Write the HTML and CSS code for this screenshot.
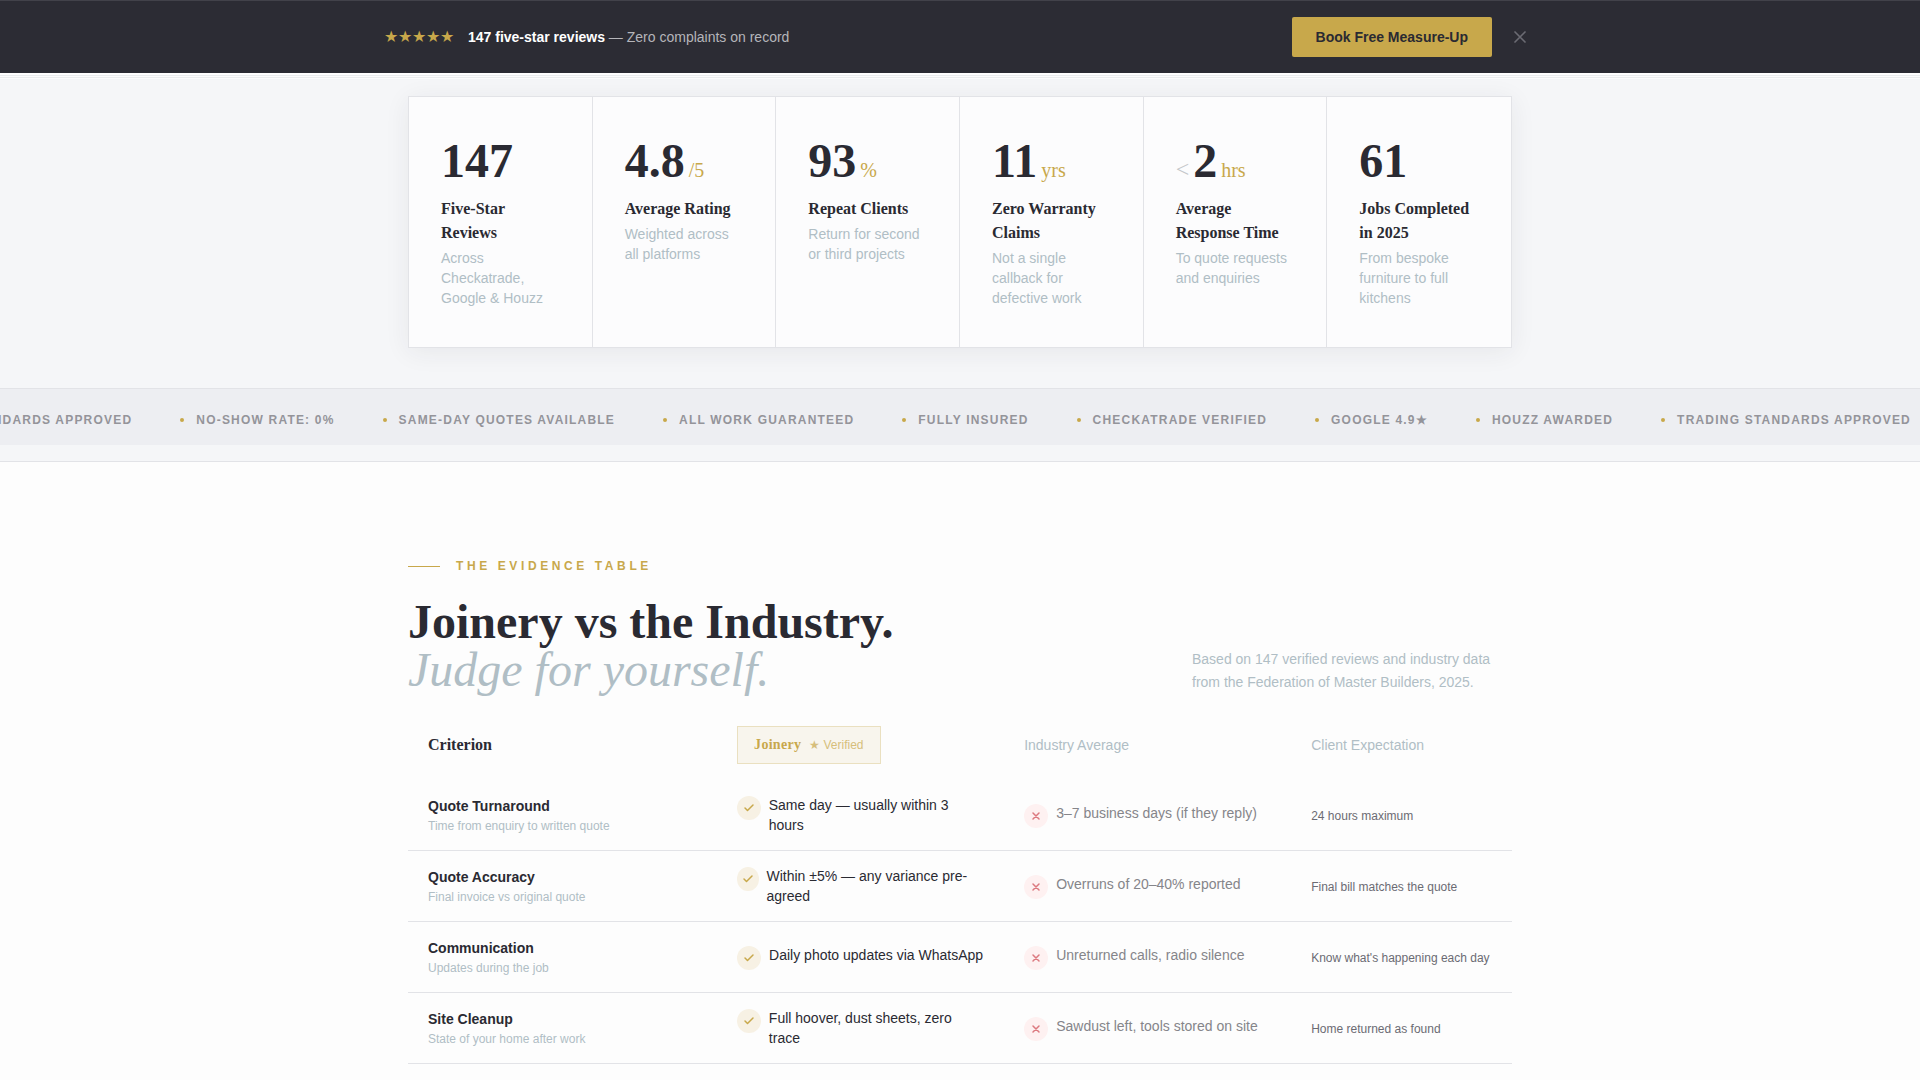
FILE: index.html
```html
<!DOCTYPE html>
<html lang="en">
<head>
<meta charset="utf-8">
<meta name="viewport" content="width=device-width, initial-scale=1">
<title>Joinery vs the Industry</title>
<link rel="stylesheet" href="styles.css">
</head>
<body>
<svg class="sprite" aria-hidden="true">
  <symbol id="check" viewBox="0 0 24 24"><path d="M20 6 9 17l-5-5"/></symbol>
  <symbol id="cross" viewBox="0 0 24 24"><path d="M18 6 6 18M6 6l12 12"/></symbol>
</svg>

<aside class="promo">
  <div class="promo-inner">
    <div class="promo-message">
      <span class="promo-stars">★★★★★</span>
      <p class="promo-text"><strong>147 five-star reviews</strong> — Zero complaints on record</p>
    </div>
    <button class="promo-book" type="button">Book Free Measure-Up</button>
    <button class="promo-close" type="button" aria-label="Dismiss"><svg class="icon"><use href="#cross"/></svg></button>
  </div>
</aside>

<section class="proof">
  <div class="container">
    <div class="stats">
      <div class="stat">
        <div class="stat-figure"><span class="stat-number">147</span></div>
        <h3 class="stat-label">Five-Star Reviews</h3>
        <p class="stat-note">Across Checkatrade, Google &amp; Houzz</p>
      </div>
      <div class="stat">
        <div class="stat-figure"><span class="stat-number">4.8</span><span class="stat-unit">/5</span></div>
        <h3 class="stat-label">Average Rating</h3>
        <p class="stat-note">Weighted across all platforms</p>
      </div>
      <div class="stat">
        <div class="stat-figure"><span class="stat-number">93</span><span class="stat-unit">%</span></div>
        <h3 class="stat-label">Repeat Clients</h3>
        <p class="stat-note">Return for second or third projects</p>
      </div>
      <div class="stat">
        <div class="stat-figure"><span class="stat-number">11</span><span class="stat-unit">yrs</span></div>
        <h3 class="stat-label">Zero Warranty Claims</h3>
        <p class="stat-note">Not a single callback for defective work</p>
      </div>
      <div class="stat">
        <div class="stat-figure"><span class="stat-prefix">&lt;</span><span class="stat-number">2</span><span class="stat-unit">hrs</span></div>
        <h3 class="stat-label">Average Response Time</h3>
        <p class="stat-note">To quote requests and enquiries</p>
      </div>
      <div class="stat">
        <div class="stat-figure"><span class="stat-number">61</span></div>
        <h3 class="stat-label">Jobs Completed in 2025</h3>
        <p class="stat-note">From bespoke furniture to full kitchens</p>
      </div>
    </div>
  </div>
  <div class="ticker">
    <ul class="ticker-track">
      <li>Trading Standards Approved</li>
      <li>No-Show Rate: 0%</li>
      <li>Same-Day Quotes Available</li>
      <li>All Work Guaranteed</li>
      <li>Fully Insured</li>
      <li>Checkatrade Verified</li>
      <li>Google 4.9★</li>
      <li>Houzz Awarded</li>
      <li>Trading Standards Approved</li>
    </ul>
  </div>
</section>

<main class="evidence">
  <div class="container">
    <p class="eyebrow">The Evidence Table</p>
    <header class="evidence-head">
      <h2 class="title">Joinery vs the Industry.<em>Judge for yourself.</em></h2>
      <p class="source">Based on 147 verified reviews and industry data from the Federation of Master Builders, 2025.</p>
    </header>
    <table class="compare">
      <thead>
        <tr>
          <th class="col-criterion" scope="col">Criterion</th>
          <th class="col-joinery" scope="col"><span class="brand"><strong>Joinery</strong><span class="brand-tag">★ Verified</span></span></th>
          <th class="col-industry" scope="col">Industry Average</th>
          <th class="col-client" scope="col">Client Expectation</th>
        </tr>
      </thead>
      <tbody>
        <tr>
          <th scope="row">Quote Turnaround<small>Time from enquiry to written quote</small></th>
          <td><div class="verdict good"><span class="mark"><svg class="icon"><use href="#check"/></svg></span><span>Same day — usually within 3 hours</span></div></td>
          <td><div class="verdict bad"><span class="mark"><svg class="icon"><use href="#cross"/></svg></span><span>3–7 business days (if they reply)</span></div></td>
          <td class="expect">24 hours maximum</td>
        </tr>
        <tr>
          <th scope="row">Quote Accuracy<small>Final invoice vs original quote</small></th>
          <td><div class="verdict good"><span class="mark"><svg class="icon"><use href="#check"/></svg></span><span>Within ±5% — any variance pre-agreed</span></div></td>
          <td><div class="verdict bad"><span class="mark"><svg class="icon"><use href="#cross"/></svg></span><span>Overruns of 20–40% reported</span></div></td>
          <td class="expect">Final bill matches the quote</td>
        </tr>
        <tr>
          <th scope="row">Communication<small>Updates during the job</small></th>
          <td><div class="verdict good"><span class="mark"><svg class="icon"><use href="#check"/></svg></span><span>Daily photo updates via WhatsApp</span></div></td>
          <td><div class="verdict bad"><span class="mark"><svg class="icon"><use href="#cross"/></svg></span><span>Unreturned calls, radio silence</span></div></td>
          <td class="expect">Know what's happening each day</td>
        </tr>
        <tr>
          <th scope="row">Site Cleanup<small>State of your home after work</small></th>
          <td><div class="verdict good"><span class="mark"><svg class="icon"><use href="#check"/></svg></span><span>Full hoover, dust sheets, zero trace</span></div></td>
          <td><div class="verdict bad"><span class="mark"><svg class="icon"><use href="#cross"/></svg></span><span>Sawdust left, tools stored on site</span></div></td>
          <td class="expect">Home returned as found</td>
        </tr>
      </tbody>
    </table>
  </div>
</main>
</body>
</html>
```
FILE: styles.css
```css
:root {
  --ink: #2a2a32;
  --gold: #c8a84b;
  --mist: #b0bec5;
  --line: #e2e3e7;
  --paper: #fdfdfd;
  --sans: "Liberation Sans", Arial, sans-serif;
  --serif: "Liberation Serif", "Times New Roman", serif;
}

* { box-sizing: border-box; }
h2, h3, p, ul { margin: 0; padding: 0; }

body {
  margin: 0;
  background: var(--paper);
  color: var(--ink);
  font: 14px/20px var(--sans);
}

.sprite { position: absolute; width: 0; height: 0; }

.icon {
  flex: none;
  width: 12px;
  height: 12px;
  fill: none;
  stroke: currentColor;
  stroke-width: 3;
  stroke-linecap: round;
  stroke-linejoin: round;
}

.container {
  max-width: 1200px;
  margin: 0 auto;
  padding: 0 48px;
}

/* Promo bar, with a ruled white edge beneath it */
.promo {
  position: relative;
  background: #2c2c34;
  border-top: 1px solid #42424a;
  box-shadow:
    0 2px #fff,
    0 3px #ebedef,
    0 4px #fdfdfd,
    0 5px #ebedef,
    0 6px #fdfdfd;
}
.promo-inner {
  display: flex;
  align-items: center;
  gap: 12px;
  max-width: 1200px;
  margin: 0 auto;
  padding: 16px 24px;
}
.promo-message {
  display: flex;
  flex: 1;
  align-items: center;
  gap: 14px;
}
.promo-stars { color: var(--gold); font-size: 16px; }
.promo-text { color: #b5b5ba; }
.promo-text strong { color: #fff; }
.promo-book {
  height: 40px;
  padding: 0 24px;
  border: 0;
  border-radius: 2px;
  background: var(--gold);
  color: var(--ink);
  font: bold 14px/20px var(--sans);
}
.promo-close {
  display: flex;
  padding: 6px;
  border: 0;
  background: none;
  color: #6b6b73;
}
.promo-close .icon { width: 20px; height: 20px; stroke-width: 2; }

/* Stats */
.proof {
  padding-top: 23px;
  background: #f5f6f8;
  border-bottom: 1px solid var(--line);
}
.stats {
  display: grid;
  grid-template-columns: repeat(6, 1fr);
  border: 1px solid var(--line);
  background: #fcfcfd;
  box-shadow: 0 4px 24px rgba(42, 42, 50, .07);
}
.stat {
  padding: 40px 30px 39px 32px;
  border-right: 1px solid var(--line);
}
.stat:last-child { border-right: 0; }
.stat-figure {
  display: flex;
  align-items: baseline;
  gap: 4px;
  margin-bottom: 12px;
  font-family: var(--serif);
}
.stat-number { font-size: 48px; font-weight: bold; line-height: 48px; }
.stat-unit, .stat-prefix { font-size: 20px; line-height: 24px; }
.stat-prefix { color: #c4c7ca; font-size: 24px; }
.stat-unit { color: var(--gold); }
.stat-label {
  margin-bottom: 3px;
  font: bold 16px/24px var(--serif);
}
.stat-note { color: var(--mist); }

/* Ticker */
.ticker {
  margin: 40px 0 16px;
  padding: 21px 0 15px;
  overflow: hidden;
  border-top: 1px solid var(--line);
  background: #edeef2;
}
.ticker-track {
  display: flex;
  justify-content: flex-end;
  gap: 48px;
  padding-right: 9px;
  list-style: none;
  color: #94949a;
  font-size: 12px;
  font-weight: bold;
  letter-spacing: .1em;
  text-transform: uppercase;
  white-space: nowrap;
}
.ticker-track li { display: flex; align-items: center; gap: 12px; }
.ticker-track li::before {
  content: "";
  width: 4px;
  height: 4px;
  border-radius: 50%;
  background: var(--gold);
}

/* Evidence */
.evidence { padding: 96px 0; }
.eyebrow {
  display: flex;
  align-items: center;
  gap: 16px;
  margin-bottom: 24px;
  color: var(--gold);
  font-size: 12px;
  font-weight: bold;
  line-height: 16px;
  letter-spacing: .3em;
  text-transform: uppercase;
}
.eyebrow::before {
  content: "";
  width: 32px;
  height: 1px;
  background: var(--gold);
}
.evidence-head {
  display: flex;
  align-items: flex-end;
  justify-content: space-between;
  margin-bottom: 16px;
}
.title { font: bold 48px/48px var(--serif); }
.title em { display: block; color: var(--mist); font-weight: normal; }
.source { flex: 0 0 320px; color: var(--mist); line-height: 23px; }

/* Comparison table */
.compare {
  width: 100%;
  table-layout: fixed;
  border-collapse: separate;
  border-spacing: 0;
}
.compare th, .compare td {
  padding: 15px 20px;
  text-align: left;
  vertical-align: middle;
}
.compare thead th {
  padding: 16px 20px;
  color: var(--mist);
  font-weight: normal;
}
.compare .col-criterion { width: 28%; color: var(--ink); font: bold 16px/24px var(--serif); }
.col-joinery, .col-industry { width: 26%; }
.col-client { width: 20%; }
.compare tbody th, .compare tbody td { border-bottom: 1px solid var(--line); }
.compare tbody th, .compare .expect { padding: 16px 20px 14px; }
.compare small {
  display: block;
  color: var(--mist);
  font-size: 12px;
  font-weight: normal;
}
.brand {
  display: flex;
  align-items: center;
  gap: 8px;
  width: fit-content;
  padding: 8px 16px;
  border: 1px solid #eae0c0;
  background: #f8f5ed;
  color: var(--gold);
}
.brand strong { font-family: var(--serif); letter-spacing: .02em; }
.brand-tag { font-size: 12px; opacity: .7; }

.verdict { display: flex; align-items: flex-start; gap: 8px; }
.mark {
  display: flex;
  align-items: center;
  justify-content: center;
  width: 24px;
  height: 24px;
  margin-top: 1px;
  border-radius: 50%;
}
.good .mark { background: #f7f1e4; color: var(--gold); }
.bad { color: #85858a; }
.bad .mark { background: #fef1f1; color: #dc7a80; }
.compare .expect { color: #6b6b73; font-size: 12px; }
```
